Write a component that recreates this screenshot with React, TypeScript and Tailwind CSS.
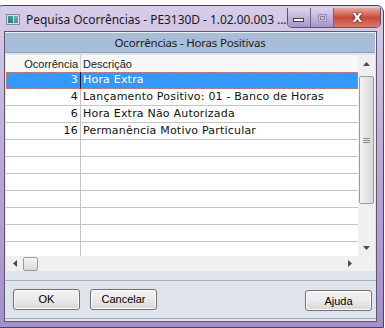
import React from 'react';

const ROWS = [
  { cod: '3', desc: 'Hora Extra' },
  { cod: '4', desc: 'Lançamento Positivo: 01 - Banco de Horas' },
  { cod: '6', desc: 'Hora Extra Não Autorizada' },
  { cod: '16', desc: 'Permanência Motivo Particular' },
];

const FILLER = 7;

const Arrow = ({ dir }: { dir: 'up' | 'down' | 'left' | 'right' }) => {
  const pts = {
    up: '0,4 3.5,0 7,4',
    down: '0,0 7,0 3.5,4',
    left: '4,0 4,7 0,3.5',
    right: '0,0 0,7 4,3.5',
  }[dir];
  const vert = dir === 'up' || dir === 'down';
  return (
    <svg width={vert ? 7 : 4} height={vert ? 4 : 7} viewBox={vert ? '0 0 7 4' : '0 0 4 7'}>
      <polygon points={pts} fill="#4b4b4b" />
    </svg>
  );
};

const WinButton = ({ label }: { label: string }) => (
  <button className="w-[67px] h-[21px] rounded-[3px] border border-[#707070] bg-gradient-to-b from-[#f2f2f2] via-[#ebebeb] to-[#d6d6d6] text-[11px] text-black font-['Liberation_Sans',sans-serif] shadow-[inset_0_0_0_1px_#fcfcfc]">
    {label}
  </button>
);

export default function App() {
  return (
    <div className="w-[385px] h-[328px] bg-white overflow-hidden pt-[5px] font-['Liberation_Sans',sans-serif]">
      {/* window frame */}
      <div className="ml-[-4px] w-[388px] h-[323px] rounded-t-[7px] border border-[#4a4458] bg-gradient-to-b from-[#d6cde8] via-[#b9a7d9] to-[#a68dcc] flex flex-col">
        {/* caption */}
        <div className="h-[25px] flex items-start">
          <div className="ml-[9px] mt-[8px] w-[15px] h-[11px] border border-[#8a8a9a] bg-[#d8dde5] flex p-[1px] gap-[1px]">
            <div className="w-[5px] bg-gradient-to-b from-[#3aa76a] to-[#1f7d8c]" />
            <div className="flex-1 bg-gradient-to-b from-[#7fa6c8] to-[#5b84b0]" />
          </div>
          <div className="ml-[6px] mt-[6px] text-[12px] text-[#1a1a1a] tracking-[-0.05px] whitespace-nowrap font-['Noto_Sans',sans-serif] leading-[16px]">
            Pequisa Ocorrências - PE3130D - 1.02.00.003 ...
          </div>
          <div className="ml-auto mr-[2px] mt-[2px] flex h-[20px] rounded-b-[5px] border border-t-0 border-[#5c5470] overflow-hidden">
            <div className="w-[26px] bg-gradient-to-b from-[#ddd5ee] to-[#a993cf] border-r border-[#6e6688] flex items-center justify-center">
              <div className="w-[11px] h-[4px] bg-white border border-[#444] mt-[5px]" />
            </div>
            <div className="w-[25px] bg-gradient-to-b from-[#ddd5ee] to-[#a993cf] border-r border-[#6e6688] flex items-center justify-center">
              <div className="w-[9px] h-[8px] border border-[#9b92b0] bg-[#c9c1dc] flex items-center justify-center">
                <div className="w-[5px] h-[4px] border border-[#8b82a2]" />
              </div>
            </div>
            <div className="w-[50px] bg-gradient-to-b from-[#eaa89c] via-[#c8483a] to-[#d47a6a] flex items-center justify-center">
              <span className="text-white font-bold text-[13px] leading-none font-['DejaVu_Sans',sans-serif] [text-shadow:0_0_2px_#3a1010,0_0_1px_#3a1010]">
                X
              </span>
            </div>
          </div>
        </div>

        {/* client area */}
        <div className="ml-[7px] mr-[6px] h-[291px] border border-[#5c5a66] bg-[#dfe4ec] flex flex-col">
          <div className="pt-[1px] pr-[1px] bg-[#eef1f6]">
            <div className="h-[20px] bg-[#a8bdd7] border-b border-[#8aa0bd] flex items-center justify-center text-[11.5px] tracking-[-0.2px] text-[#1a1a1a] font-['Noto_Sans',sans-serif]">
              Ocorrências - Horas Positivas
            </div>
          </div>

          {/* grid */}
          <div className="mt-[2px] mr-[1px] ml-[1px] h-[216px] bg-white flex flex-col">
            <div className="flex h-[201px]">
              <div className="flex-1 overflow-hidden">
                <div className="flex h-[17px] bg-[#f7f7f7] text-[11px] text-[#1a1a1a] leading-[18px]">
                  <div className="w-[75px] border-r border-[#d4d4d4] text-right pr-[2px]">Ocorrência</div>
                  <div className="pl-[2px]">Descrição</div>
                </div>
                {ROWS.map((r, i) => (
                  <div
                    key={r.cod}
                    className={
                      i === 0
                        ? 'flex h-[17px] bg-[#3399ff] outline-1 outline-dashed outline-[#ff6a3d] -outline-offset-1 text-white text-[11px] tracking-[0.2px] leading-[16px] font-["DejaVu_Sans",sans-serif]'
                        : 'flex h-[17px] border-b border-[#c4c4c4] text-[#111] text-[11px] tracking-[0.2px] leading-[16px] font-["DejaVu_Sans",sans-serif]'
                    }
                  >
                    <div className={'w-[75px] border-r text-right pr-[2px] ' + (i === 0 ? 'border-[#1a1a1a]' : 'border-[#c4c4c4]')}>
                      {r.cod}
                    </div>
                    <div className="pl-[2px] whitespace-nowrap">{r.desc}</div>
                  </div>
                ))}
                {Array.from({ length: FILLER }).map((_, i) => (
                  <div key={i} className="flex h-[17px] border-b border-[#c4c4c4]">
                    <div className="w-[75px] border-r border-[#c4c4c4]" />
                  </div>
                ))}
              </div>
              {/* vertical scrollbar */}
              <div className="w-[17px] bg-[#f0f0f0] flex flex-col items-stretch">
                <div className="h-[17px] flex items-center justify-center">
                  <Arrow dir="up" />
                </div>
                <div className="flex-1 pt-[4px]">
                  <div className="h-[128px] mx-[1px] rounded-[2px] border border-[#9c9c9c] bg-gradient-to-r from-[#f4f4f4] to-[#d9d9d9] flex items-center justify-center">
                    <div className="flex flex-col gap-[1px]">
                      <div className="w-[7px] h-px bg-[#8c8c8c]" />
                      <div className="w-[7px] h-px bg-[#8c8c8c]" />
                      <div className="w-[7px] h-px bg-[#8c8c8c]" />
                    </div>
                  </div>
                </div>
                <div className="h-[17px] flex items-center justify-center">
                  <Arrow dir="down" />
                </div>
              </div>
            </div>
            {/* horizontal scrollbar */}
            <div className="flex h-[15px] bg-[#f0f0f0]">
              <div className="flex-1 flex items-center">
                <div className="w-[17px] flex justify-center">
                  <Arrow dir="left" />
                </div>
                <div className="w-[15px] h-[14px] rounded-[2px] border border-[#9c9c9c] bg-gradient-to-b from-[#f4f4f4] to-[#d9d9d9]" />
                <div className="ml-auto w-[17px] flex justify-center">
                  <Arrow dir="right" />
                </div>
              </div>
              <div className="w-[17px] bg-[#f0f0f0]" />
            </div>
          </div>

          {/* buttons panel */}
          <div className="mt-[9px] h-[39px] border-y border-[#a4adbd] bg-[#dfe4ec] flex items-center pl-[8px] pr-[4px] gap-[10px]">
            <WinButton label="OK" />
            <WinButton label="Cancelar" />
            <div className="ml-auto">
              <WinButton label="Ajuda" />
            </div>
          </div>
        </div>
      </div>
    </div>
  );
}
